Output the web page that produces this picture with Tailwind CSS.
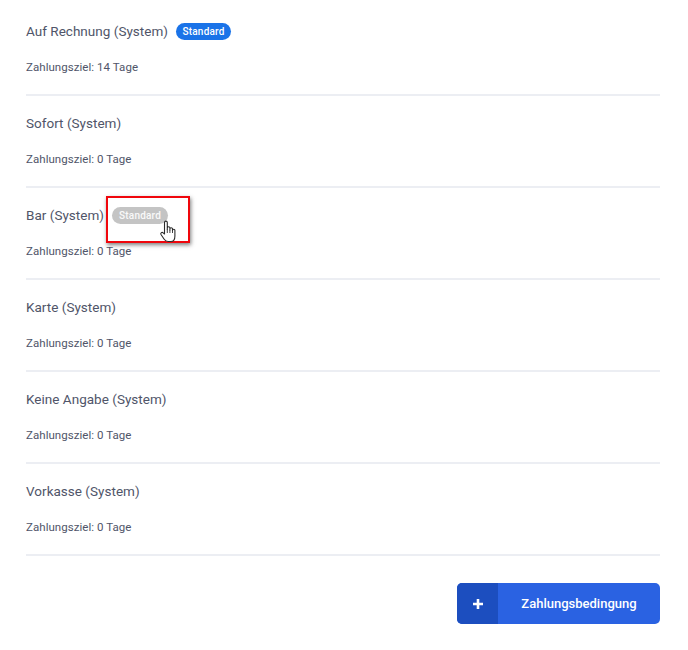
<!DOCTYPE html>
<html lang="de">
<head>
  <meta charset="UTF-8">
  <title>Zahlungsbedingungen</title>
  <script src="https://cdn.jsdelivr.net/npm/@tailwindcss/browser@4"></script>
</head>
<body class="bg-white font-['Roboto',sans-serif] text-[#505569] w-[688px] h-[650px] overflow-hidden">
  <div class="pl-[26px] pr-[28px]">
    <!-- Zahlungsbedingungen -->
    <div class="h-[96px] pt-[22px] border-b-2 border-[#eceef3]">
      <div class="flex items-center h-[18px] gap-[8px]">
        <span class="text-[13.5px] tracking-[0.02px]">Auf Rechnung (System)</span>
        <span class="h-[17px] w-[55px] rounded-full bg-[#1a73e8] text-white text-[10px] font-medium tracking-[0.2px] flex items-center justify-center">Standard</span>
      </div>
      <p class="mt-[20px] text-[11.5px] leading-[14px] tracking-[0.05px]">Zahlungsziel: 14 Tage</p>
    </div>
    <div class="h-[92px] pt-[18px] border-b-2 border-[#eceef3]">
      <div class="flex items-center h-[18px]"><span class="text-[13.5px] tracking-[0.02px]">Sofort (System)</span></div>
      <p class="mt-[20px] text-[11.5px] leading-[14px] tracking-[0.05px]">Zahlungsziel: 0 Tage</p>
    </div>
    <div class="h-[92px] pt-[18px] border-b-2 border-[#eceef3]">
      <div class="flex items-center h-[18px] gap-[8px] relative">
        <span class="text-[13.5px] tracking-[0.02px]">Bar (System)</span>
        <span class="h-[17px] w-[56px] rounded-full bg-[#c4c4c4] text-white/90 text-[10px] font-medium tracking-[0.2px] flex items-center justify-center">Standard</span>
        <!-- Markierung -->
        <div class="absolute left-[80px] top-[-10px] w-[84px] h-[47px] border-2 border-[#f0060c] shadow-[1px_2px_4px_rgba(0,0,0,0.5)]"></div>
        <svg class="absolute left-[133px] top-[14px]" width="18" height="23" viewBox="0 0 17 23">
          <path d="M5 13V2.500a1.400 1.400 0 0 1 2.800 0V9.500V8a1.300 1.300 0 0 1 2.600 0v2V9a1.300 1.300 0 0 1 2.600 0v1.500a1.200 1.200 0 0 1 2.400 0V16c0 3-1.500 5.500-4 5.500H8.500c-2 0-3-1-4-2.500L1.500 14.500a1.400 1.400 0 0 1 2.200-1.700L5 14z" fill="#fff" stroke="#2b2b2b" stroke-width="1.100" stroke-linejoin="round"/>
          <path d="M7.800 9.500V13M10.400 10V13M13 10.500V13" stroke="#2b2b2b" stroke-width="0.900" fill="none"/>
        </svg>
      </div>
      <p class="mt-[20px] text-[11.5px] leading-[14px] tracking-[0.05px]">Zahlungsziel: 0 Tage</p>
    </div>
    <div class="h-[92px] pt-[18px] border-b-2 border-[#eceef3]">
      <div class="flex items-center h-[18px]"><span class="text-[13.5px] tracking-[0.02px]">Karte (System)</span></div>
      <p class="mt-[20px] text-[11.5px] leading-[14px] tracking-[0.05px]">Zahlungsziel: 0 Tage</p>
    </div>
    <div class="h-[92px] pt-[18px] border-b-2 border-[#eceef3]">
      <div class="flex items-center h-[18px]"><span class="text-[13.5px] tracking-[0.02px]">Keine Angabe (System)</span></div>
      <p class="mt-[20px] text-[11.5px] leading-[14px] tracking-[0.05px]">Zahlungsziel: 0 Tage</p>
    </div>
    <div class="h-[92px] pt-[18px] border-b-2 border-[#eceef3]">
      <div class="flex items-center h-[18px]"><span class="text-[13.5px] tracking-[0.02px]">Vorkasse (System)</span></div>
      <p class="mt-[20px] text-[11.5px] leading-[14px] tracking-[0.05px]">Zahlungsziel: 0 Tage</p>
    </div>

    <div class="flex justify-end mt-[27px]">
      <button class="flex h-[41px] w-[203px] rounded-[5px] overflow-hidden bg-[#2a62e2] text-white">
        <span class="w-[41px] h-full bg-[#1c4ebf] flex items-center justify-center">
          <svg width="12" height="12" viewBox="0 0 12 12"><path d="M6 1v10M1 6h10" stroke="#fff" stroke-width="2.600"/></svg>
        </span>
        <span class="flex-1 h-full flex items-center justify-center text-[13px] font-medium">Zahlungsbedingung</span>
      </button>
    </div>
  </div>
</body>
</html>
